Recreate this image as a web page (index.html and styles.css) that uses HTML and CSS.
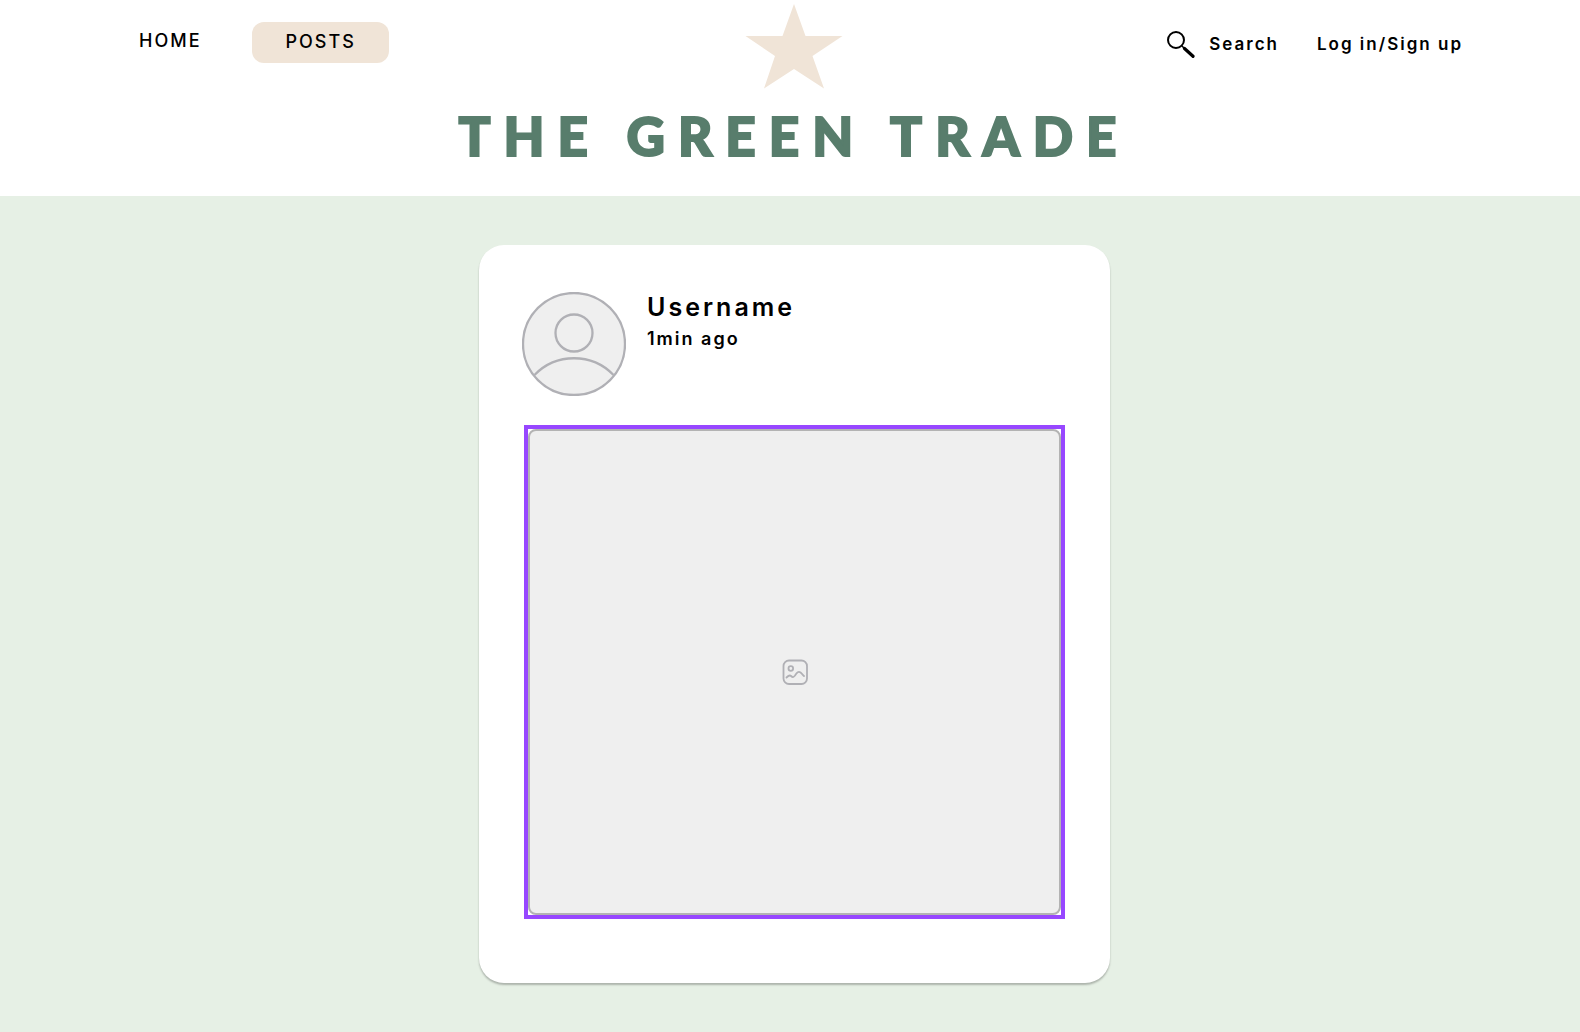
FILE: index.html
```html
<!DOCTYPE html>
<html lang="en">
<head>
<meta charset="utf-8">
<meta name="viewport" content="width=device-width, initial-scale=1">
<title>The Green Trade</title>
<link rel="stylesheet" href="styles.css">
</head>
<body>
<header class="site-header">
  <div class="top-bar">
    <nav class="main-nav">
      <a class="nav-link" href="#">HOME</a>
      <a class="nav-link nav-link-active" href="#">POSTS</a>
    </nav>
    <svg class="logo" viewBox="0 0 98 86" aria-hidden="true">
      <path d="M49 0L60.500 32H97.500L67.500 52L79 84.500L49 65L19 84.500L30 52L.5 32H37.500Z" fill="#f0e4d7"/>
    </svg>
    <nav class="account-nav">
      <a class="search-link" href="#">
        <svg class="search-icon" viewBox="0 0 28 28" aria-hidden="true">
          <circle cx="9" cy="10" r="8" fill="none" stroke="#000" stroke-width="2"/>
          <path d="M15 16L18 19" stroke="#000" stroke-width="1.500"/>
          <path d="M17.500 18.500L26 26.300" stroke="#000" stroke-width="3.200" stroke-linecap="round"/>
        </svg>
        Search
      </a>
      <a href="#">Log in/Sign up</a>
    </nav>
  </div>
  <h1 class="site-title">THE GREEN TRADE</h1>
</header>
<main class="feed">
  <article class="post">
    <div class="post-header">
      <svg class="avatar" viewBox="0 0 104 104" aria-hidden="true">
        <circle cx="52" cy="52" r="51" fill="#efefef" stroke="#b0b0b5" stroke-width="2.300"/>
        <circle cx="52" cy="41" r="18.500" fill="none" stroke="#b0b0b5" stroke-width="2.300"/>
        <path d="M12.500 83A55 55 0 0 1 91.500 83" fill="none" stroke="#b0b0b5" stroke-width="2.300"/>
      </svg>
      <div class="post-meta">
        <h2 class="username">Username</h2>
        <p class="time">1min ago</p>
      </div>
    </div>
    <div class="photo-frame">
      <div class="photo">
        <svg class="photo-icon" viewBox="0 0 26 26" fill="none" stroke="#b0b0b5" stroke-width="1.800" stroke-linecap="round" stroke-linejoin="round" aria-hidden="true">
          <rect x="1.500" y="1.500" width="23.500" height="23.500" rx="5.500"/>
          <circle cx="8.800" cy="9.500" r="2.300"/>
          <path d="M4.500 18.500C6 17 7.500 15.500 9 17C10.500 18.500 11.500 18.500 13 16.500C15 13.500 16.500 12 18.500 13.500C19.800 14.500 20.800 15.800 22 17"/>
        </svg>
      </div>
    </div>
  </article>
</main>
</body>
</html>
```
FILE: styles.css
```css
* {
  box-sizing: border-box;
}

body {
  display: flex;
  flex-direction: column;
  min-height: 100vh;
  margin: 0;
  background: #e6f0e5;
  color: #000;
  font-family: Inter, "Liberation Sans", sans-serif;
  font-size: 18px;
  font-weight: 600;
  line-height: 24px;
  letter-spacing: 2px;
}

a {
  color: inherit;
  text-decoration: none;
}

.site-header {
  padding: 4px 116px 28px 124px;
  background: #fff;
}

.top-bar {
  display: grid;
  grid-template-columns: 1fr auto 1fr;
  align-items: start;
}

.main-nav {
  display: flex;
  align-items: flex-start;
  gap: 51px;
  padding: 18px 0 0 15px;
  font-weight: 500;
}

.nav-link {
  padding-top: 7px;
}

.nav-link-active {
  padding: 8px 33px 9px;
  border-radius: 12px;
  background: #f0e4d7;
}

.logo {
  width: 98px;
  height: 86px;
}

.account-nav {
  display: flex;
  justify-content: flex-end;
  align-items: center;
  gap: 38px;
  padding: 26px 1px 0 0;
  font-size: 17px;
}

.search-link {
  display: flex;
  align-items: center;
  gap: 14px;
}

.search-icon {
  width: 28px;
  height: 28px;
}

.site-title {
  margin: 14px 0 0;
  color: #587d6c;
  font-family: Lato, "Open Sans", sans-serif;
  font-size: 53px;
  font-weight: 900;
  line-height: 64px;
  letter-spacing: 13px;
  text-align: center;
  -webkit-text-stroke: 2px #587d6c;
}

.feed {
  flex: 1;
  padding: 49px 24px 49px 33px;
}

.post {
  max-width: 631px;
  margin: 0 auto;
  padding: 47px 45px 64px 43px;
  border-radius: 25px;
  background: #fff;
  box-shadow: 0 2px 2px rgba(0, 0, 0, 0.25);
}

.post-header {
  display: flex;
  gap: 21px;
}

.avatar {
  flex: none;
  width: 104px;
  height: 104px;
}

.username {
  margin: 0;
  font-size: 25px;
  font-weight: 600;
  line-height: 30px;
  letter-spacing: 3px;
}

.time {
  margin: 5px 0 0;
}

.photo-frame {
  margin: 29px 0 0 2px;
  border: 4px solid #9747ff;
}

.photo {
  display: grid;
  place-items: center;
  aspect-ratio: 533 / 486;
  border: 2px solid #b3b3b3;
  border-radius: 8px;
  background: #efefef;
}

.photo-icon {
  width: 26px;
  height: 26px;
}
```
